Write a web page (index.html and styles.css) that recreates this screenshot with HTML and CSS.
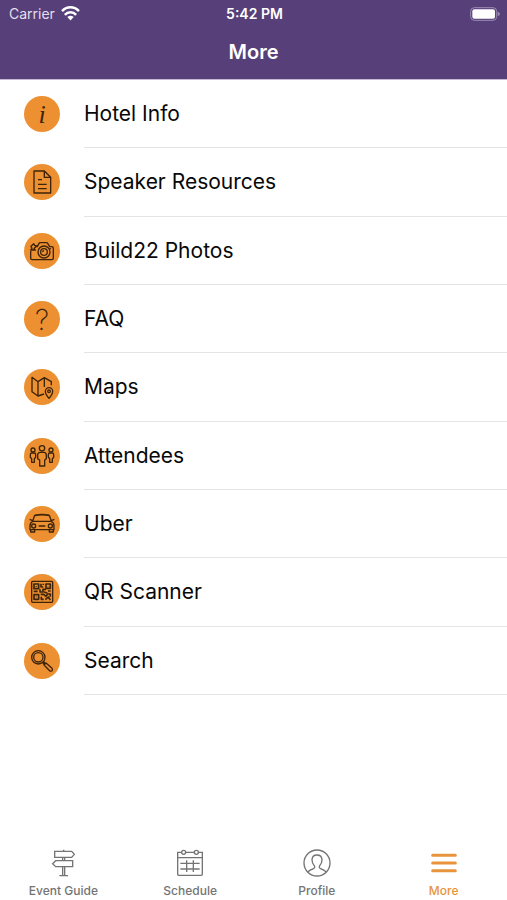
FILE: index.html
```html
<!DOCTYPE html>
<html lang="en">
<head>
  <meta charset="UTF-8">
  <meta name="viewport" content="width=device-width, initial-scale=1">
  <title>More</title>
  <link rel="stylesheet" href="styles.css">
</head>
<body>
  <header class="header">
    <div class="status-bar">
      <div class="carrier">
        <span>Carrier</span>
        <svg class="wifi" viewBox="0 0 54 42" aria-hidden="true">
          <path d="M3 14C17 0 37 0 51 14" />
          <path d="M11 25C20 15 34 15 43 25" />
          <path class="wifi-dot" d="M18 31Q27 24 36 31L27 41Z" />
        </svg>
      </div>
      <span class="time">5:42 PM</span>
      <svg class="battery" viewBox="0 0 90 42" aria-hidden="true">
        <rect class="battery-case" x="2" y="2" width="78" height="38" rx="11" />
        <rect x="7" y="7" width="68" height="28" rx="6" />
        <path class="battery-tip" d="M83 14Q90 17 90 21T83 28Z" />
      </svg>
    </div>
    <h1>More</h1>
  </header>

  <main>
    <ul class="menu">
      <li><a href="#hotel">
        <svg class="icon" viewBox="0 0 108 108" aria-hidden="true">
          <circle class="disc" cx="54" cy="54" r="54" />
          <text class="letter-i" x="54" y="82">i</text>
        </svg>
        <span>Hotel Info</span>
      </a></li>
      <li><a href="#speakers">
        <svg class="icon" viewBox="0 0 108 108" aria-hidden="true">
          <circle class="disc" cx="54" cy="54" r="54" />
          <path d="M30 21H61L80 40V87H30ZM61 21V40H80M42 47H54M42 61H68M42 74H68" />
        </svg>
        <span>Speaker Resources</span>
      </a></li>
      <li><a href="#photos">
        <svg class="icon" viewBox="0 0 108 108" aria-hidden="true">
          <circle class="disc" cx="54" cy="54" r="54" />
          <path d="M20 54V76Q20 80 24 80H84Q88 80 88 76V46Q88 41 83 41H77L71 31Q70 29 67 29H49Q46 29 45 31L40 41H34" />
          <circle cx="60" cy="57" r="18" />
          <circle cx="60" cy="57" r="10" />
          <path d="M56 57Q56 53 60 53M77 47H81M21 40L29 32L32 37L37 38L30 48L34 51H20L24 46Z" />
        </svg>
        <span>Build22 Photos</span>
      </a></li>
      <li><a href="#faq">
        <svg class="icon" viewBox="0 0 108 108" aria-hidden="true">
          <circle class="disc" cx="54" cy="54" r="54" />
          <text class="letter-q" x="54" y="86">?</text>
        </svg>
        <span>FAQ</span>
      </a></li>
      <li><a href="#maps">
        <svg class="icon" viewBox="0 0 108 108" aria-hidden="true">
          <circle class="disc" cx="54" cy="54" r="54" />
          <path d="M60 75L42 81L24 68V25L42 38L61 26L82 38V49M42 38V81M61 26V54" />
          <path d="M75 88Q64 76 64 67A11 11 0 0 1 86 67Q86 76 75 88Z" />
          <circle cx="75" cy="67" r="4" />
        </svg>
        <span>Maps</span>
      </a></li>
      <li><a href="#attendees">
        <svg class="icon" viewBox="0 0 108 108" aria-hidden="true">
          <circle class="disc" cx="54" cy="54" r="54" />
          <circle cx="54" cy="31" r="8" />
          <path d="M48 43H60Q66 43 67 50V62L62 66V84H47V66L41 62V50Q42 43 48 43Z" />
          <circle cx="27" cy="36" r="6" />
          <path d="M23 45H31Q35 45 35 50V58L31 62V73H23V62L19 58V50Q19 45 23 45Z" />
          <circle cx="81" cy="36" r="6" />
          <path d="M77 45H85Q89 45 89 50V58L85 62V73H77V62L73 58V50Q73 45 77 45Z" />
        </svg>
        <span>Attendees</span>
      </a></li>
      <li><a href="#uber">
        <svg class="icon" viewBox="0 0 108 108" aria-hidden="true">
          <circle class="disc" cx="54" cy="54" r="54" />
          <path class="bold" d="M32 28Q54 24 76 28" />
          <path d="M32 28L26 46Q18 50 18 60V71H90V60Q90 50 82 46L76 28M26 46H82M17 40L26 44M91 40L82 44M44 60H64M20 71V78H32V72M88 71V78H76V72" />
          <circle cx="29" cy="60" r="6" />
          <circle cx="79" cy="60" r="6" />
        </svg>
        <span>Uber</span>
      </a></li>
      <li><a href="#scanner">
        <svg class="icon" viewBox="0 0 108 108" aria-hidden="true">
          <circle class="disc" cx="54" cy="54" r="54" />
          <rect x="23" y="22" width="63" height="63" rx="3" />
          <path class="bold" d="M30 30H44V44H30ZM66 30H79V43H66ZM30 62H44V76H30ZM37 36V38M72 36V37M37 68V70" />
          <path class="bold" d="M51 29V39H58M58 29V33M29 52H41M48 46V54H57V46H66M72 51H80M50 61H59L66 67L71 60H79V68M52 68V76H59M64 77L73 69L79 78M60 54L70 57" />
        </svg>
        <span>QR Scanner</span>
      </a></li>
      <li><a href="#search">
        <svg class="icon" viewBox="0 0 108 108" aria-hidden="true">
          <circle class="disc" cx="54" cy="54" r="54" />
          <circle cx="43" cy="43" r="20" />
          <circle cx="43" cy="43" r="14" />
          <path d="M57 60L60 57L64 61L60 64ZM60 66L66 60L84 76Q87 80 84 83Q80 86 77 83Z" />
        </svg>
        <span>Search</span>
      </a></li>
    </ul>
  </main>

  <nav class="tabs">
    <a href="#guide">
      <svg viewBox="0 0 84 84" aria-hidden="true">
        <path d="M17 7H68L76 16L68 25H17ZM20 35H71V53H20L11 44ZM44 2V7M41 25V35M47 25V35M41 53V80M47 53V80M31 80H57" />
      </svg>
      <span>Event Guide</span>
    </a>
    <a href="#schedule">
      <svg viewBox="0 0 84 84" aria-hidden="true">
        <path d="M17 10H5V76Q5 79 8 79H76Q79 79 79 76V10H67M29 10H55M5 26H79M13 43H71M13 60H71M32 34V69M52 34V69" />
        <circle cx="23" cy="10" r="6" />
        <circle cx="61" cy="10" r="6" />
      </svg>
      <span>Schedule</span>
    </a>
    <a href="#profile">
      <svg viewBox="0 0 84 84" aria-hidden="true">
        <circle cx="42" cy="42" r="39" />
        <path d="M14 69Q20 63 33 58Q37 55 34 50Q27 43 27 32Q28 18 42 18T57 32Q57 43 50 50Q47 55 51 58Q64 63 70 69" />
      </svg>
      <span>Profile</span>
    </a>
    <a href="#more" class="active" aria-current="page">
      <svg viewBox="0 0 84 84" aria-hidden="true">
        <path d="M8 19H76M8 42H76M8 65H76" />
      </svg>
      <span>More</span>
    </a>
  </nav>
</body>
</html>
```
FILE: styles.css
```css
* {
  box-sizing: border-box;
}
body {
  margin: 0;
  min-height: 100vh;
  display: flex;
  flex-direction: column;
  font-family: Inter, "Liberation Sans", sans-serif;
  background: white;
  color: #080808;
}
a {
  color: inherit;
  text-decoration: none;
}

/* header */
.header {
  background: #573f79;
  border-bottom: 1px solid #c4b8d2;
  color: #fff;
}
.status-bar {
  display: grid;
  grid-template-columns: 1fr auto 1fr;
  align-items: center;
  height: 27px;
  padding: 0 7px 0 9px;
  font-size: 14px;
}
.carrier {
  display: flex;
  align-items: center;
  gap: 6px;
  color: #e4dfeb;
}
.time {
  font-weight: 600;
}
.wifi {
  width: 19px;
  height: 15px;
  fill: none;
  stroke: #fff;
  stroke-width: 7;
}
.wifi-dot {
  fill: #fff;
  stroke: none;
}
.battery {
  justify-self: end;
  width: 30px;
  height: 14px;
  fill: #fff;
}
.battery-case {
  fill: none;
  stroke: #9c8cb2;
  stroke-width: 3;
}
.battery-tip {
  fill: #9c8cb2;
}
h1 {
  margin: 0;
  font-size: 20px;
  font-weight: 600;
  line-height: 50px;
  padding-bottom: 2px;
  text-align: center;
}

/* menu */
main {
  flex: 1;
}
.menu {
  display: grid;
  grid-auto-rows: 1fr;
  min-height: 615px;
  margin: 0;
  padding: 0;
  list-style: none;
}
.menu li {
  display: flex;
}
.menu a {
  flex: 1;
  display: flex;
  gap: 24px;
  padding-left: 24px;
  font-size: 21px;
}
.menu span {
  flex: 1;
  display: flex;
  align-items: center;
  border-bottom: 1px solid #e4e4e6;
}
.icon {
  align-self: center;
  width: 36px;
  height: 36px;
  fill: none;
  stroke: #3d230a;
  stroke-width: 4;
  stroke-linejoin: round;
}
.icon .disc {
  fill: #ec9031;
  stroke: none;
}
.icon .bold {
  stroke-width: 5;
}
.icon text {
  fill: #3d230a;
  stroke: none;
  text-anchor: middle;
}
.letter-i {
  font: italic 78px "Liberation Serif", serif;
}
.letter-q {
  font: 200 86px Inter, sans-serif;
}

/* bottom tabs */
.tabs {
  display: grid;
  grid-template-columns: repeat(4, 1fr);
  padding-bottom: 1px;
  color: #747474;
  font-size: 12px;
  font-weight: 500;
  line-height: 16px;
}
.tabs a {
  display: flex;
  flex-direction: column;
  align-items: center;
  gap: 6px;
}
.tabs svg {
  width: 28px;
  height: 28px;
  fill: none;
  stroke: currentColor;
  stroke-width: 4;
}
.tabs .active {
  color: #e8943c;
}
.tabs .active svg {
  stroke-width: 9;
  stroke-linecap: round;
}
```
